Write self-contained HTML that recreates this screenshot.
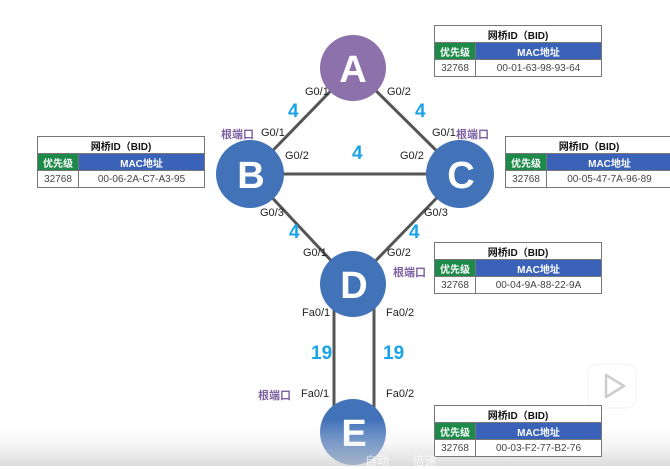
<!DOCTYPE html>
<html><head><meta charset="utf-8"><style>
body{margin:0;width:670px;height:466px;overflow:hidden;background:#fff;position:relative;font-family:"Liberation Sans","Noto Sans CJK SC",sans-serif}
.t{position:absolute;font-size:11px;color:#222}
.n{position:absolute;font-size:19px;font-weight:bold;color:#1aa3e8}
.r{position:absolute;font-size:11px;font-weight:bold;color:#7b5fa0}
table{position:absolute;border-collapse:collapse;font-size:10px;width:168px;background:#fff}
td{border:1px solid #777;text-align:center;height:16px;padding:0}
.h{font-weight:bold;color:#111}
.g{background:#1e8a4a;color:#fff;font-weight:bold;width:40px}
.b{background:#3a62b8;color:#fff;font-weight:bold}
.d{color:#444}
</style></head><body>
<svg width="670" height="466" style="position:absolute;left:0;top:0">
<g stroke="#555" stroke-width="3">
<line x1="353" y1="68" x2="250" y2="174"/><line x1="353" y1="68" x2="460" y2="174"/>
<line x1="250" y1="174" x2="460" y2="174"/><line x1="250" y1="174" x2="353" y2="284"/>
<line x1="460" y1="174" x2="353" y2="284"/>
<line x1="334" y1="300" x2="334" y2="415"/><line x1="374" y1="300" x2="374" y2="415"/>
</g>
<circle cx="353" cy="68" r="33" fill="#8c71ab"/>
<circle cx="250" cy="174" r="34" fill="#4272b8"/>
<circle cx="460" cy="174" r="34" fill="#4272b8"/>
<circle cx="353" cy="284" r="33" fill="#4272b8"/>
<circle cx="353" cy="432" r="33" fill="#4272b8"/>
<g fill="#fff" font-family="Liberation Sans" font-weight="bold" font-size="38" text-anchor="middle">
<text x="353" y="82">A</text><text x="251" y="188">B</text><text x="461" y="188">C</text><text x="354" y="298">D</text><text x="354" y="446">E</text>
</g>
<defs><linearGradient id="gr" x1="0" y1="0" x2="0" y2="1"><stop offset="0" stop-color="#fff" stop-opacity="0"/><stop offset="1" stop-color="#ccc" stop-opacity=".7"/></linearGradient></defs>
<rect x="0" y="420" width="670" height="46" fill="url(#gr)"/>
<rect x="588" y="364" width="48" height="44" rx="10" fill="#fff" stroke="#eee" opacity=".9"/>
<path d="M606 375 L606 397 L624 386 Z" fill="none" stroke="#ccc" stroke-width="2.5" stroke-linejoin="round"/>
</svg>
<div class="t" style="left:305px;top:86px">G0/1</div><div class="t" style="left:387px;top:86px">G0/2</div>
<div class="n" style="left:288px;top:101px">4</div><div class="n" style="left:415px;top:101px">4</div>
<div class="r" style="left:221px;top:126px">根端口</div><div class="t" style="left:261px;top:127px">G0/1</div>
<div class="t" style="left:285px;top:150px">G0/2</div><div class="n" style="left:352px;top:143px">4</div><div class="t" style="left:400px;top:150px">G0/2</div>
<div class="t" style="left:432px;top:127px">G0/1</div><div class="r" style="left:456px;top:126px">根端口</div>
<div class="t" style="left:260px;top:207px">G0/3</div><div class="n" style="left:289px;top:222px">4</div>
<div class="t" style="left:424px;top:207px">G0/3</div><div class="n" style="left:409px;top:222px">4</div>
<div class="t" style="left:303px;top:247px">G0/1</div><div class="t" style="left:387px;top:247px">G0/2</div>
<div class="r" style="left:393px;top:264px">根端口</div>
<div class="t" style="left:302px;top:307px">Fa0/1</div><div class="t" style="left:386px;top:307px">Fa0/2</div>
<div class="n" style="left:311px;top:343px">19</div><div class="n" style="left:383px;top:343px">19</div>
<div class="r" style="left:258px;top:387px">根端口</div><div class="t" style="left:301px;top:388px">Fa0/1</div><div class="t" style="left:386px;top:388px">Fa0/2</div>
<table style="left:434px;top:25px"><tr><td colspan="2" class="h">网桥ID（BID)</td></tr><tr><td class="g">优先级</td><td class="b">MAC地址</td></tr><tr><td class="d">32768</td><td class="d">00-01-63-98-93-64</td></tr></table>
<table style="left:37px;top:136px"><tr><td colspan="2" class="h">网桥ID（BID)</td></tr><tr><td class="g">优先级</td><td class="b">MAC地址</td></tr><tr><td class="d">32768</td><td class="d">00-06-2A-C7-A3-95</td></tr></table>
<table style="left:505px;top:136px"><tr><td colspan="2" class="h">网桥ID（BID)</td></tr><tr><td class="g">优先级</td><td class="b">MAC地址</td></tr><tr><td class="d">32768</td><td class="d">00-05-47-7A-96-89</td></tr></table>
<table style="left:434px;top:242px"><tr><td colspan="2" class="h">网桥ID（BID)</td></tr><tr><td class="g">优先级</td><td class="b">MAC地址</td></tr><tr><td class="d">32768</td><td class="d">00-04-9A-88-22-9A</td></tr></table>
<table style="left:434px;top:405px"><tr><td colspan="2" class="h">网桥ID（BID)</td></tr><tr><td class="g">优先级</td><td class="b">MAC地址</td></tr><tr><td class="d">32768</td><td class="d">00-03-F2-77-B2-76</td></tr></table>
<div style="position:absolute;left:365px;top:452px;color:rgba(255,255,255,.7);font-size:12px;word-spacing:20px">自动 倍速</div>
</body></html>
